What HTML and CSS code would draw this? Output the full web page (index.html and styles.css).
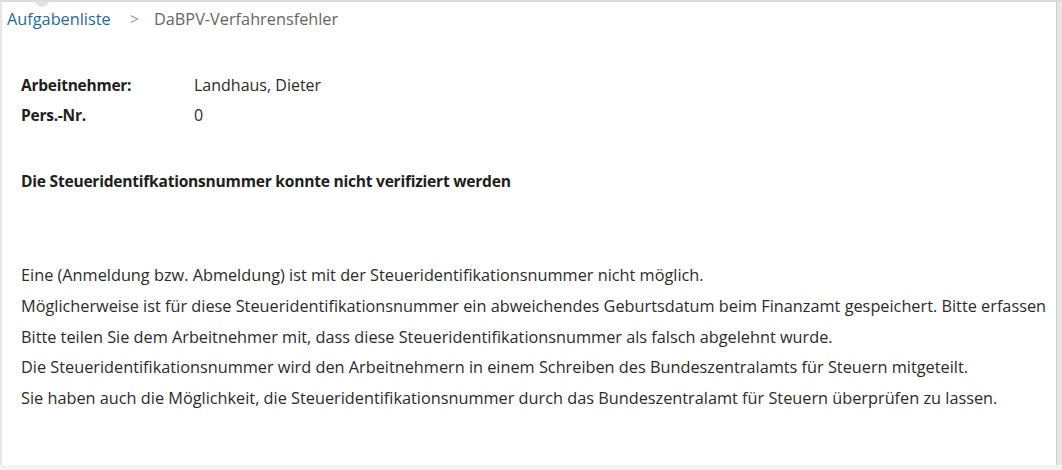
FILE: index.html
```html
<!DOCTYPE html>
<html lang="de">

<head>
    <meta charset="UTF-8">
    <meta name="viewport" content="width=device-width, initial-scale=1.0">
    <title>DaBPV-Verfahrensfehler</title>
    <link rel="stylesheet" href="styles.css">
</head>

<body>
    <div class="page">
        <div class="card">
            <span class="tab-knob"></span>
            <nav class="breadcrumb">
                <a class="crumb-link">Aufgabenliste</a>
                <span class="crumb-sep">&gt;</span>
                <span class="crumb-current">DaBPV-Verfahrensfehler</span>
            </nav>

            <div class="details">
                <div class="detail-row">
                    <span class="detail-label">Arbeitnehmer:</span>
                    <span class="detail-value">Landhaus, Dieter</span>
                </div>
                <div class="detail-row">
                    <span class="detail-label">Pers.-Nr.</span>
                    <span class="detail-value">0</span>
                </div>
            </div>

            <h2 class="error-title">Die Steueridentifkationsnummer konnte nicht verifiziert werden</h2>

            <div class="error-text">
                <p>Eine (Anmeldung bzw. Abmeldung) ist mit der Steueridentifikationsnummer nicht möglich.</p>
                <p>Möglicherweise ist für diese Steueridentifikationsnummer ein abweichendes Geburtsdatum beim Finanzamt gespeichert. Bitte erfassen</p>
                <p>Bitte teilen Sie dem Arbeitnehmer mit, dass diese Steueridentifikationsnummer als falsch abgelehnt wurde.</p>
                <p>Die Steueridentifikationsnummer wird den Arbeitnehmern in einem Schreiben des Bundeszentralamts für Steuern mitgeteilt.</p>
                <p>Sie haben auch die Möglichkeit, die Steueridentifikationsnummer durch das Bundeszentralamt für Steuern überprüfen zu lassen.</p>
            </div>
        </div>
        <div class="rail"></div>
    </div>
</body>

</html>
```

FILE: styles.css
```css
body {
    margin: 0;
    background: #f3f3f3;
    font-family: "Open Sans", "Noto Sans", sans-serif;
    color: #2b2b2b;
}

.page {
    display: flex;
    height: 465px;
    border-top: 2px solid #dcdcdc;
    box-sizing: border-box;
}

.card {
    flex: 1;
    position: relative;
    background: #fff;
    border-left: 2px solid #e6e6e6;
    border-right: 1px solid #cfcfcf;
    overflow: hidden;
}

.rail {
    width: 5px;
    background: #e6e6e6;
}

.tab-knob {
    position: absolute;
    left: 33px;
    top: -9px;
    width: 14px;
    height: 14px;
    border-radius: 50%;
    background: #e4e4e4;
}

.breadcrumb {
    display: flex;
    align-items: center;
    height: 34px;
    padding-left: 5px;
    font-size: 16.3px;
}

.crumb-link {
    color: #1f6a9a;
}

.crumb-sep {
    color: #9a9a9a;
    margin: 0 15px 0 19px;
}

.crumb-current {
    color: #666;
}

.details {
    margin-top: 34px;
    padding-left: 19px;
}

.detail-row {
    display: flex;
    height: 30px;
    align-items: center;
    font-size: 16px;
}

.detail-label {
    width: 173px;
    font-size: 15.5px;
    letter-spacing: -0.25px;
    font-weight: 700;
    color: #1e1e1e;
}

.error-title {
    margin: 40px 0 0;
    padding-left: 19px;
    font-size: 15.6px;
    letter-spacing: -0.25px;
    line-height: 22px;
    font-weight: 700;
    color: #1e1e1e;
}

.error-text {
    margin-top: 68px;
    padding-left: 19px;
    font-size: 16.3px;
}

.error-text p {
    margin: 0;
    line-height: 30.75px;
    white-space: nowrap;
}
```
